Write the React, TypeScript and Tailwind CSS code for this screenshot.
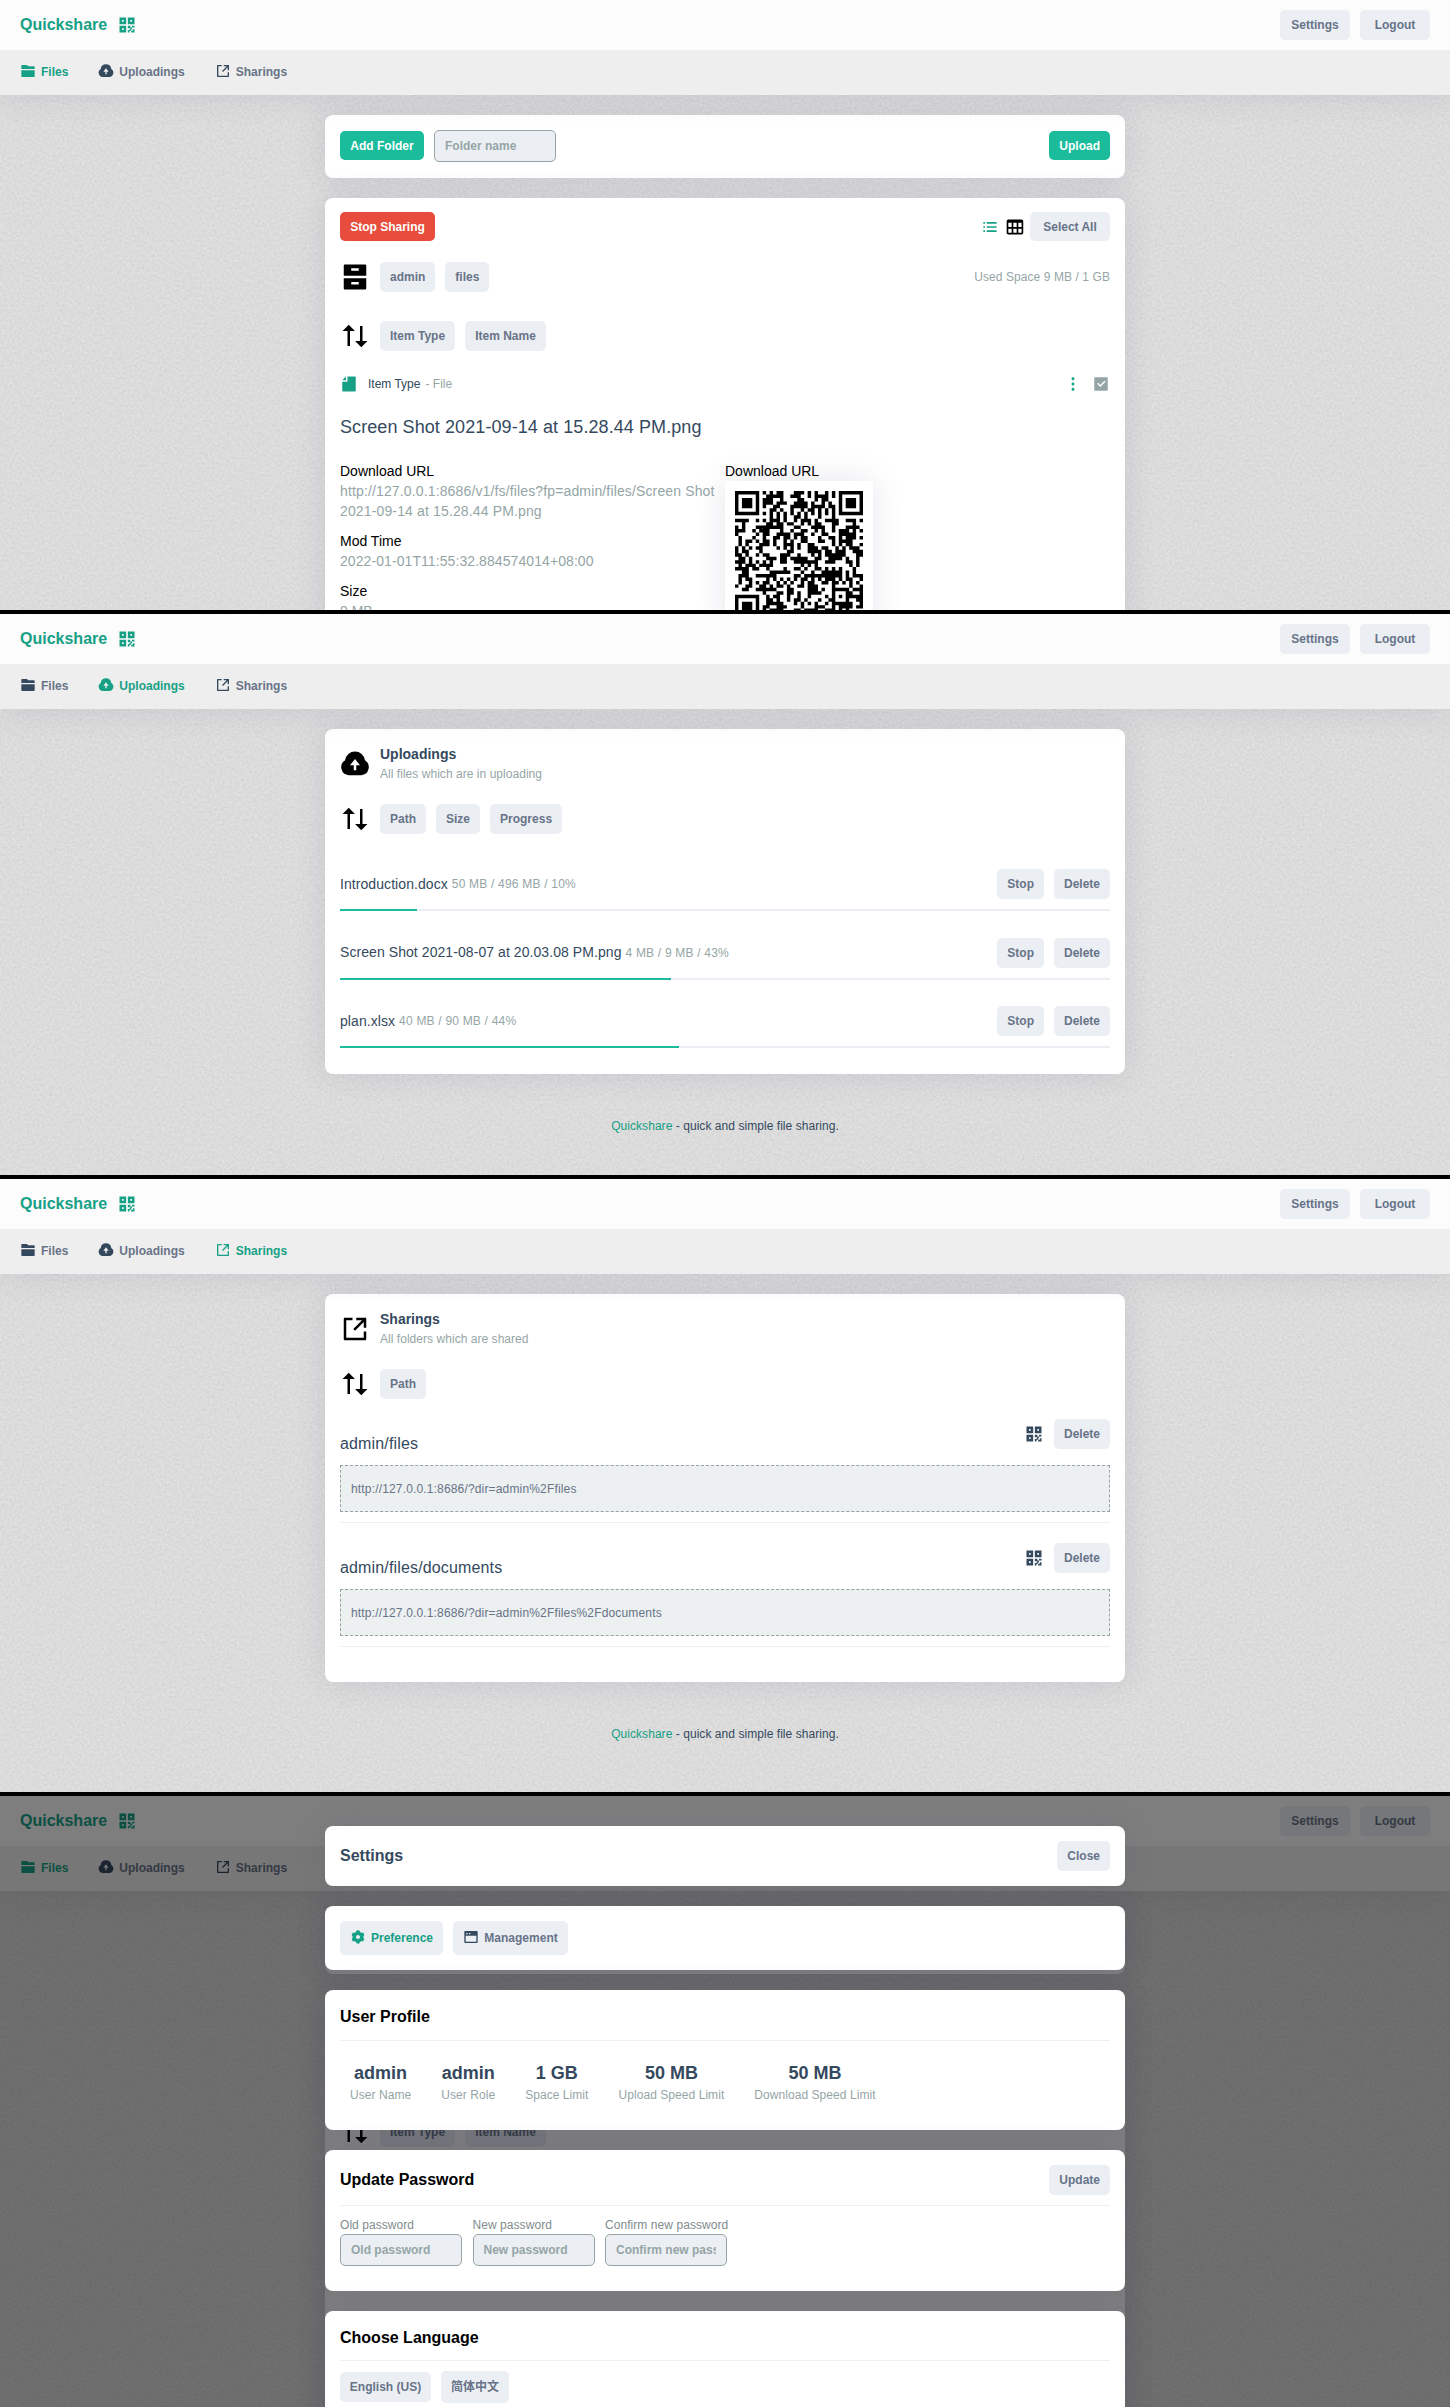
import React from "react";
import {
  RiQrCodeFill,
  RiFolder2Fill,
  RiShareBoxLine,
  RiArchiveDrawerFill,
  RiFile2Fill,
  RiMore2Fill,
  RiCheckboxFill,
  RiSettings3Fill,
  RiWindowFill,
} from "react-icons/ri";
import { BiListUl, BiTable } from "react-icons/bi";

const FONT = "font-['Liberation_Sans','Noto_Sans_CJK_SC',sans-serif]";
const SHADOW = "shadow-[0_0_30px_0_rgba(80,80,130,0.14)]";

/* ---------- QR code (version 5, level L, byte mode) ---------- */

function qrMatrix(text: string): boolean[][] {
  const n = 37;
  const dataLen = 108;
  const ecLen = 26;

  const exp: number[] = new Array(512).fill(0);
  const log: number[] = new Array(256).fill(0);
  for (let i = 0, x = 1; i < 255; i++) {
    exp[i] = x;
    log[x] = i;
    x <<= 1;
    if (x & 256) x ^= 0x11d;
  }
  for (let i = 255; i < 512; i++) exp[i] = exp[i - 255];
  const mul = (a: number, b: number) => (a && b ? exp[log[a] + log[b]] : 0);

  const bits: number[] = [];
  const push = (v: number, len: number) => {
    for (let i = len - 1; i >= 0; i--) bits.push((v >> i) & 1);
  };
  push(4, 4);
  push(text.length, 8);
  for (const c of text) push(c.charCodeAt(0), 8);
  push(0, 4);
  while (bits.length % 8) bits.push(0);
  const data: number[] = [];
  for (let i = 0; i < bits.length; i += 8) data.push(parseInt(bits.slice(i, i + 8).join(""), 2));
  for (let i = 0; data.length < dataLen; i++) data.push(i % 2 ? 0x11 : 0xec);

  let gen = [1];
  for (let i = 0; i < ecLen; i++) {
    const next = new Array(gen.length + 1).fill(0);
    gen.forEach((g, j) => {
      next[j] ^= g;
      next[j + 1] ^= mul(g, exp[i]);
    });
    gen = next;
  }
  const rem = [...data, ...new Array(ecLen).fill(0)];
  for (let i = 0; i < dataLen; i++) {
    const f = rem[i];
    if (f) gen.forEach((g, j) => (rem[i + j] ^= mul(g, f)));
  }
  const words = [...data, ...rem.slice(dataLen)];

  const m: (boolean | null)[][] = Array.from({ length: n }, () => new Array(n).fill(null));
  const finder = (r0: number, c0: number) => {
    for (let r = -1; r <= 7; r++)
      for (let c = -1; c <= 7; c++) {
        const y = r0 + r;
        const x = c0 + c;
        if (y < 0 || x < 0 || y >= n || x >= n) continue;
        const d = Math.max(Math.abs(r - 3), Math.abs(c - 3));
        m[y][x] = d !== 2 && d !== 4;
      }
  };
  finder(0, 0);
  finder(0, n - 7);
  finder(n - 7, 0);
  for (let r = -2; r <= 2; r++)
    for (let c = -2; c <= 2; c++) m[30 + r][30 + c] = Math.max(Math.abs(r), Math.abs(c)) !== 1;
  for (let i = 8; i < n - 8; i++) {
    m[6][i] = i % 2 === 0;
    m[i][6] = i % 2 === 0;
  }
  const f = "111100010011101".split("").map((b) => b === "1");
  for (let i = 0; i < 6; i++) {
    m[8][i] = f[i];
    m[5 - i][8] = f[9 + i];
  }
  m[8][7] = f[6];
  m[8][8] = f[7];
  m[7][8] = f[8];
  for (let i = 0; i < 7; i++) m[n - 1 - i][8] = f[i];
  for (let i = 0; i < 8; i++) m[8][n - 8 + i] = f[7 + i];
  m[n - 8][8] = true;

  let k = 0;
  let up = true;
  for (let right = n - 1; right > 0; right -= 2) {
    if (right === 6) right = 5;
    for (let i = 0; i < n; i++) {
      const y = up ? n - 1 - i : i;
      for (const x of [right, right - 1]) {
        if (m[y][x] !== null) continue;
        const bit = k < words.length * 8 ? (words[k >> 3] >> (7 - (k & 7))) & 1 : 0;
        m[y][x] = (bit === 1) !== ((y + x) % 3 === 0);
        k++;
      }
    }
    up = !up;
  }
  return m as boolean[][];
}

function QrCode({ value }: { value: string }) {
  const d = qrMatrix(value)
    .map((row, y) => row.map((on, x) => (on ? `M${x} ${y}h1v1h-1z` : "")).join(""))
    .join("");
  return (
    <svg width="128" height="128" viewBox="0 0 37 37" className="block">
      <path d={d} fill="#000" />
    </svg>
  );
}

/* ---------- icons ---------- */

function SortIcon() {
  return (
    <svg width="30" height="30" viewBox="0 0 24 24" className="shrink-0">
      <path d="M11.95 7.95H8V20H6V7.95H2.05L7 3zM21.95 16.05L17 21l-4.95-4.95H16V4h2v12.05z" />
    </svg>
  );
}

function CloudIcon({ size }: { size: number }) {
  return (
    <svg width={size} height={size} viewBox="0 0 24 24" fill="currentColor" className="shrink-0">
      <path d="M7 20.981a6.5 6.5 0 0 1-2.936-12 8.001 8.001 0 0 1 15.872 0 6.5 6.5 0 0 1-2.936 12V21H7v-.019zM13 13h3l-4-5-4 5h3v4h2v-4z" />
    </svg>
  );
}

/* ---------- building blocks ---------- */

type Tab = "Files" | "Uploadings" | "Sharings";

function Btn({ children, className = "" }: { children: React.ReactNode; className?: string }) {
  return (
    <button
      className={`flex h-[30px] shrink-0 items-center justify-center whitespace-nowrap rounded-[5px] bg-[#ebeff4] px-[10px] text-[12px] font-bold text-[#687388] ${className}`}
    >
      {children}
    </button>
  );
}

function Field({ placeholder }: { placeholder: string }) {
  return (
    <input
      placeholder={placeholder}
      className="block h-[32px] w-[122px] rounded-[5px] border border-[#95a5a6] bg-[#ebeff4] px-[10px] text-[12px] font-bold placeholder:text-[#95a5a6] placeholder:opacity-100"
    />
  );
}

function Card({ children, className = "" }: { children?: React.ReactNode; className?: string }) {
  return <section className={`mx-auto w-[800px] rounded-[8px] bg-white px-[15px] ${SHADOW} ${className}`}>{children}</section>;
}

function Paper() {
  return (
    <svg className="absolute inset-0 h-full w-full" aria-hidden="true">
      <filter id="paper" x="0" y="0" width="100%" height="100%" colorInterpolationFilters="sRGB">
        <feTurbulence type="fractalNoise" baseFrequency="0.4" numOctaves="2" seed="7" />
        <feColorMatrix values="0.09 0 0 0 0.815  0.09 0 0 0 0.815  0.09 0 0 0 0.815  0 0 0 0 1" />
      </filter>
      <rect width="100%" height="100%" filter="url(#paper)" />
    </svg>
  );
}

function Header({ active }: { active: Tab }) {
  const tabs: { name: Tab; icon: React.ReactNode }[] = [
    { name: "Files", icon: <RiFolder2Fill size={16} /> },
    { name: "Uploadings", icon: <CloudIcon size={16} /> },
    { name: "Sharings", icon: <RiShareBoxLine size={16} /> },
  ];
  return (
    <header className={`relative z-10 ${SHADOW}`}>
      <div className="flex h-[50px] items-center bg-[#fcfcfc] px-5">
        <span className="text-[16px] font-bold leading-5 text-[#16a085]">Quickshare</span>
        <RiQrCodeFill size={20} className="ml-[10px] text-[#16a085]" />
        <div className="ml-auto flex gap-[10px]">
          <Btn className="w-[70px]">Settings</Btn>
          <Btn className="w-[70px]">Logout</Btn>
        </div>
      </div>
      <nav className="flex h-[45px] items-center gap-[30px] bg-[#eeeeee] px-5 pb-px">
        {tabs.map((t) => (
          <span
            key={t.name}
            className={`flex items-center gap-[5px] text-[12px] font-bold ${t.name === active ? "text-[#16a085]" : "text-[#687388]"}`}
          >
            <span className={`-mt-[2px] ${t.name === active ? "" : "text-[#34495e]"}`}>{t.icon}</span>
            {t.name}
          </span>
        ))}
      </nav>
    </header>
  );
}

function Screen({ active, height, children, overlay }: { active: Tab; height: string; children: React.ReactNode; overlay?: React.ReactNode }) {
  return (
    <div className={`relative overflow-hidden bg-[#dcdcdc] ${height}`}>
      <Paper />
      <div className="relative">
        <Header active={active} />
        <main className="flex flex-col gap-5 pt-5">{children}</main>
      </div>
      {overlay}
    </div>
  );
}

function Footer() {
  return (
    <footer className="mt-6 text-center text-[12px] leading-4 tracking-[0.05px] text-[#34495e]">
      <span className="text-[#16a085]">Quickshare</span> - quick and simple file sharing.
    </footer>
  );
}

function SortRow({ keys, className = "" }: { keys: string[]; className?: string }) {
  return (
    <div className={`flex gap-[10px] ${className}`}>
      <SortIcon />
      {keys.map((k) => (
        <Btn key={k}>{k}</Btn>
      ))}
    </div>
  );
}

function Info({ label, children, className = "" }: { label: string; children: React.ReactNode; className?: string }) {
  return (
    <div className={`text-[14px] leading-5 ${className}`}>
      <div className="tracking-normal text-black">{label}</div>
      <div className="text-[#95a5a6]">{children}</div>
    </div>
  );
}

/* ---------- screens ---------- */

const FILE_URL = "http://127.0.0.1:8686/v1/fs/files?fp=admin/files/Screen Shot 2021-09-14 at 15.28.44 PM.png";

function FileDetails() {
  return (
    <>
      <div className="mt-[24px] flex h-[18px] items-center text-[12px]">
        <RiFile2Fill size={18} className="text-[#16a085]" />
        <span className="ml-[10px] text-[#34495e]">Item Type</span>
        <span className="ml-[5px] text-[#95a5a6]">- File</span>
        <RiMore2Fill size={18} className="ml-auto text-[#16a085]" />
        <RiCheckboxFill size={18} className="ml-[10px] text-[#95a5a6]" />
      </div>
      <h2 className="mt-[22px] text-[18px] leading-6 tracking-[0.08px] text-[#34495e]">Screen Shot 2021-09-14 at 15.28.44 PM.png</h2>
      <div className="mt-[22px] flex">
        <div className="w-[385px]">
          <Info label="Download URL" className="tracking-[0.14px]">
            {FILE_URL}
          </Info>
          <Info label="Mod Time" className="mt-[10px] tracking-[0.08px]">
            2022-01-01T11:55:32.884574014+08:00
          </Info>
          <Info label="Size" className="mt-[10px]">
            9 MB
          </Info>
        </div>
        <Info label="Download URL">
          <div className={`bg-white p-[10px] ${SHADOW}`}>
            <QrCode value={FILE_URL} />
          </div>
        </Info>
      </div>
    </>
  );
}

function FilesContent({ details = false }: { details?: boolean }) {
  return (
    <>
      <Card className="h-[63px] pt-[15px]">
        <div className="flex items-start">
          <Btn className="mt-px h-[29px]! w-[84px] bg-[#1abc9c]! text-white!">Add Folder</Btn>
          <div className="ml-[10px]">
            <Field placeholder="Folder name" />
          </div>
          <Btn className="ml-auto mt-px h-[29px]! bg-[#1abc9c]! text-white!">Upload</Btn>
        </div>
      </Card>
      <Card className="h-[560px] pt-[14px]">
        <div className="flex items-center">
          <Btn className="h-[29px]! w-[95px] bg-[#e74c3c]! text-white!">Stop Sharing</Btn>
          <BiListUl size={20} className="ml-auto text-[#16a085]" />
          <BiTable size={20} className="ml-[5px] text-black" />
          <Btn className="ml-[5px] h-[29px]! w-[80px]">Select All</Btn>
        </div>
        <div className="mt-5 flex items-center gap-[10px]">
          <RiArchiveDrawerFill size={30} className="mt-px" />
          <Btn>admin</Btn>
          <Btn>files</Btn>
          <span className="ml-auto text-[12px] tracking-[0.08px] text-[#95a5a6]">Used Space 9 MB / 1 GB</span>
        </div>
        <SortRow keys={["Item Type", "Item Name"]} className="mt-[29px]" />
        {details && <FileDetails />}
      </Card>
    </>
  );
}

function Heading({ icon, title, sub }: { icon: React.ReactNode; title: string; sub: string }) {
  return (
    <div className="flex items-center gap-[10px] text-black">
      {icon}
      <div className="leading-5">
        <div className="text-[14px] font-bold text-[#34495e]">{title}</div>
        <div className="text-[12px] tracking-[0.04px] text-[#95a5a6]">{sub}</div>
      </div>
    </div>
  );
}

const UPLOADS = [
  { name: "Introduction.docx", info: "50 MB / 496 MB / 10%", pct: 10 },
  { name: "Screen Shot 2021-08-07 at 20.03.08 PM.png", info: "4 MB / 9 MB / 43%", pct: 43 },
  { name: "plan.xlsx", info: "40 MB / 90 MB / 44%", pct: 44 },
];

function UploadsContent() {
  return (
    <>
      <Card className="h-[345px] pt-[15px]">
        <Heading icon={<CloudIcon size={30} />} title="Uploadings" sub="All files which are in uploading" />
        <SortRow keys={["Path", "Size", "Progress"]} className="mb-[35px] mt-[20px]" />
        {UPLOADS.map((u) => (
          <div key={u.name} className="mb-[26.7px]">
            <div className="flex h-[30px] items-center">
              <span className="text-[14px] tracking-[0.07px] text-[#34495e]">{u.name}</span>
              <span className="ml-[4px] text-[12px] tracking-[0.2px] text-[#95a5a6]">{u.info}</span>
              <Btn className="ml-auto">Stop</Btn>
              <Btn className="ml-[10px]">Delete</Btn>
            </div>
            <div className="mt-[10px] h-[2px] bg-[#ebeff4]">
              <div className="h-full bg-[#1abc9c]" style={{ width: `${u.pct}%` }} />
            </div>
          </div>
        ))}
      </Card>
      <Footer />
    </>
  );
}

const SHARES = [
  { name: "admin/files", url: "http://127.0.0.1:8686/?dir=admin%2Ffiles" },
  { name: "admin/files/documents", url: "http://127.0.0.1:8686/?dir=admin%2Ffiles%2Fdocuments" },
];

function SharesContent() {
  return (
    <>
      <Card className="h-[388px] pt-[15px]">
        <Heading icon={<RiShareBoxLine size={30} />} title="Sharings" sub="All folders which are shared" />
        <SortRow keys={["Path"]} className="mt-[20px]" />
        {SHARES.map((s) => (
          <div key={s.name} className="mt-[20px]">
            <div className="flex h-[30px] items-center">
              <span className="mt-5 text-[16px] leading-5 tracking-[0.15px] text-[#34495e]">{s.name}</span>
              <RiQrCodeFill size={20} className="ml-auto text-[#34495e]" />
              <Btn className="ml-[10px]">Delete</Btn>
            </div>
            <div className="mt-4 flex h-[47px] items-center border border-dashed border-[#95a5a6] bg-[#ecf0f1] px-[10px] text-[12px] tracking-[0.16px] text-[#687388]">
              {s.url}
            </div>
            <div className="mt-[10px] h-px bg-[#ecf0f1]" />
          </div>
        ))}
      </Card>
      <Footer />
    </>
  );
}

const PROFILE = [
  ["admin", "User Name"],
  ["admin", "User Role"],
  ["1 GB", "Space Limit"],
  ["50 MB", "Upload Speed Limit"],
  ["50 MB", "Download Speed Limit"],
];

function SettingsOverlay() {
  return (
    <div className="absolute inset-0 z-20 bg-black/50 pt-[30px]">
      <div className="flex flex-col gap-5">
        <Card className="flex h-[60px] items-center justify-between">
          <h3 className="text-[16px] font-bold text-[#34495e]">Settings</h3>
          <Btn>Close</Btn>
        </Card>
        <Card className="flex h-[64px] items-center gap-[10px]">
          <Btn className="h-[34px]! gap-[5px] text-[#16a085]!">
            <RiSettings3Fill size={16} className="-mt-[2px]" />
            Preference
          </Btn>
          <Btn className="h-[34px]! w-[115px] gap-[5px]">
            <RiWindowFill size={16} className="-mt-[2px] text-[#34495e]" />
            Management
          </Btn>
        </Card>
        <Card className="h-[140px]">
          <h3 className="flex h-[51px] items-center border-b border-[#ecf0f1] pt-1 text-[16px] font-bold text-black">User Profile</h3>
          <div className="mt-5 flex gap-[30px] px-[10px] text-center">
            {PROFILE.map(([v, l]) => (
              <div key={l}>
                <div className="text-[18px] font-bold leading-6 text-[#34495e]">{v}</div>
                <div className="text-[12px] leading-5 tracking-[0.06px] text-[#95a5a6]">{l}</div>
              </div>
            ))}
          </div>
        </Card>
        <Card className="h-[141px]">
          <div className="flex h-[56px] items-center justify-between border-b border-[#ecf0f1] pt-[5px]">
            <h3 className="text-[16px] font-bold text-black">Update Password</h3>
            <Btn>Update</Btn>
          </div>
          <div className="mt-[10px] flex gap-[10px]">
            {["Old password", "New password", "Confirm new password"].map((p) => (
              <div key={p} className="w-[122.5px]">
                <div className="whitespace-nowrap text-[12px] leading-[18px] tracking-[0.06px] text-[#7f8c8d]">{p}</div>
                <Field placeholder={p} />
              </div>
            ))}
          </div>
        </Card>
        <Card className="h-[140px]">
          <h3 className="flex h-[50px] items-center border-b border-[#ecf0f1] pt-1 text-[16px] font-bold text-black">Choose Language</h3>
          <div className="mt-[10px] flex items-center gap-[10px]">
            <Btn className="w-[91px]">English (US)</Btn>
            <Btn className="h-[32px]!">简体中文</Btn>
          </div>
        </Card>
      </div>
    </div>
  );
}

export default function App() {
  return (
    <div className={`flex h-[2407px] w-[1450px] flex-col gap-1 overflow-hidden bg-black ${FONT}`}>
      <Screen active="Files" height="h-[610px]">
        <FilesContent details />
      </Screen>
      <Screen active="Uploadings" height="h-[561px]">
        <UploadsContent />
      </Screen>
      <Screen active="Sharings" height="h-[613px]">
        <SharesContent />
      </Screen>
      <Screen active="Files" height="h-[611px]" overlay={<SettingsOverlay />}>
        <FilesContent />
      </Screen>
    </div>
  );
}
